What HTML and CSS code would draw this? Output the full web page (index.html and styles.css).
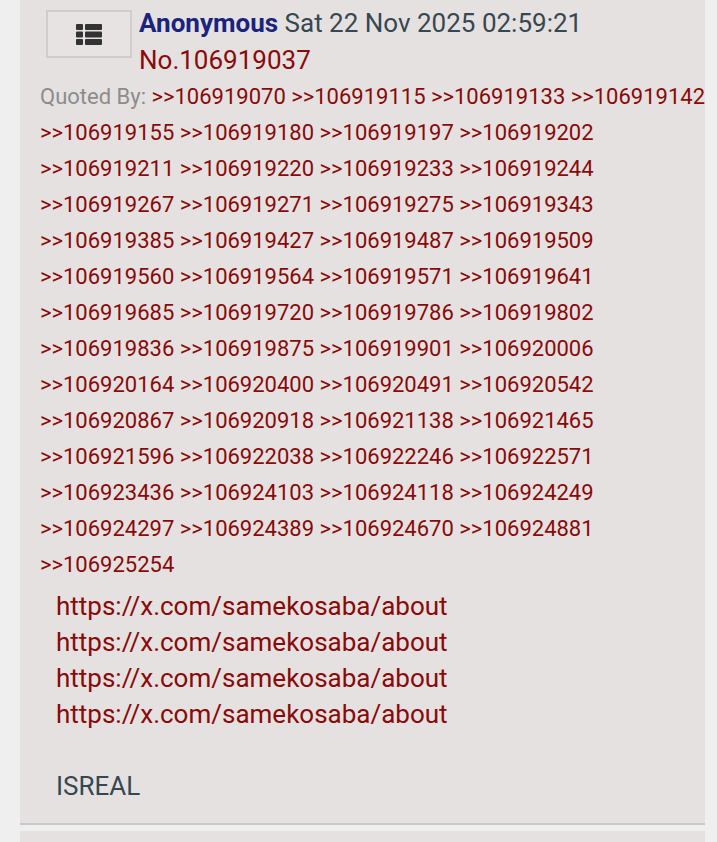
FILE: index.html
```html
<!DOCTYPE html>
<html lang="en">
<head>
    <meta charset="UTF-8">
    <meta name="viewport" content="width=device-width, initial-scale=1.0">
    <title>Thread</title>
    <link rel="stylesheet" href="styles.css">
</head>
<body>

<div class="post">
    <div class="post-head">
        <button class="menu-btn" aria-label="Post menu">
            <svg width="26" height="21" viewBox="0 0 26 21">
                <rect x="0" y="0" width="7" height="6" rx="1"/>
                <rect x="0" y="7.5" width="7" height="6" rx="1"/>
                <rect x="0" y="15" width="7" height="6" rx="1"/>
                <rect x="9" y="0" width="17" height="6" rx="1"/>
                <rect x="9" y="7.5" width="17" height="6" rx="1"/>
                <rect x="9" y="15" width="17" height="6" rx="1"/>
            </svg>
        </button>
        <div class="post-info">
            <span class="name">Anonymous</span> <span class="date">Sat 22 Nov 2025 02:59:21</span><br>
            <a class="post-no" href="#">No.106919037</a>
        </div>
    </div>

    <div class="backlinks">
        <span class="label">Quoted By:</span>
        <a href="#">&gt;&gt;106919070</a> <a href="#">&gt;&gt;106919115</a> <a href="#">&gt;&gt;106919133</a> <a href="#">&gt;&gt;106919142</a>
        <a href="#">&gt;&gt;106919155</a> <a href="#">&gt;&gt;106919180</a> <a href="#">&gt;&gt;106919197</a> <a href="#">&gt;&gt;106919202</a>
        <a href="#">&gt;&gt;106919211</a> <a href="#">&gt;&gt;106919220</a> <a href="#">&gt;&gt;106919233</a> <a href="#">&gt;&gt;106919244</a>
        <a href="#">&gt;&gt;106919267</a> <a href="#">&gt;&gt;106919271</a> <a href="#">&gt;&gt;106919275</a> <a href="#">&gt;&gt;106919343</a>
        <a href="#">&gt;&gt;106919385</a> <a href="#">&gt;&gt;106919427</a> <a href="#">&gt;&gt;106919487</a> <a href="#">&gt;&gt;106919509</a>
        <a href="#">&gt;&gt;106919560</a> <a href="#">&gt;&gt;106919564</a> <a href="#">&gt;&gt;106919571</a> <a href="#">&gt;&gt;106919641</a>
        <a href="#">&gt;&gt;106919685</a> <a href="#">&gt;&gt;106919720</a> <a href="#">&gt;&gt;106919786</a> <a href="#">&gt;&gt;106919802</a>
        <a href="#">&gt;&gt;106919836</a> <a href="#">&gt;&gt;106919875</a> <a href="#">&gt;&gt;106919901</a> <a href="#">&gt;&gt;106920006</a>
        <a href="#">&gt;&gt;106920164</a> <a href="#">&gt;&gt;106920400</a> <a href="#">&gt;&gt;106920491</a> <a href="#">&gt;&gt;106920542</a>
        <a href="#">&gt;&gt;106920867</a> <a href="#">&gt;&gt;106920918</a> <a href="#">&gt;&gt;106921138</a> <a href="#">&gt;&gt;106921465</a>
        <a href="#">&gt;&gt;106921596</a> <a href="#">&gt;&gt;106922038</a> <a href="#">&gt;&gt;106922246</a> <a href="#">&gt;&gt;106922571</a>
        <a href="#">&gt;&gt;106923436</a> <a href="#">&gt;&gt;106924103</a> <a href="#">&gt;&gt;106924118</a> <a href="#">&gt;&gt;106924249</a>
        <a href="#">&gt;&gt;106924297</a> <a href="#">&gt;&gt;106924389</a> <a href="#">&gt;&gt;106924670</a> <a href="#">&gt;&gt;106924881</a>
        <a href="#">&gt;&gt;106925254</a>
    </div>

    <div class="message">
        <a href="#">https://x.com/samekosaba/about</a><br>
        <a href="#">https://x.com/samekosaba/about</a><br>
        <a href="#">https://x.com/samekosaba/about</a><br>
        <a href="#">https://x.com/samekosaba/about</a><br>
        <br>
        ISREAL
    </div>
</div>

<div class="post next"></div>

</body>
</html>
```

FILE: styles.css
```css
body {
    font-family: Roboto, "Noto Sans", sans-serif;
    background-color: #efefef;
    margin: 0;
    padding: 0;
}

a {
    color: #880a0a;
    text-decoration: none;
}

.post {
    background-color: #e5e1e0;
    margin: 0 12px 6px 20px;
    border-bottom: 2px solid #cbc9c9;
    padding: 5px 0 19px 0;
}

.post.next {
    height: 40px;
    padding: 0;
    border: none;
}

.post-head {
    display: flex;
    align-items: flex-start;
}

.menu-btn {
    width: 86px;
    height: 48px;
    margin: 5px 7px 0 26px;
    background-color: #e6e3e2;
    border: 2px solid #d0cdcc;
    display: flex;
    align-items: center;
    justify-content: center;
    padding: 0;
}

.menu-btn svg {
    fill: #333;
}

.post-info {
    font-size: 26px;
    line-height: 37px;
    color: #37474f;
}

.name {
    color: #1a237e;
    font-weight: bold;
}

.backlinks {
    padding: 0 0 0 20px;
    font-size: 22px;
    line-height: 36px;
    margin-right: -4px;
}

.backlinks .label {
    color: #8c8c8c;
}

.message {
    padding: 5px 0 0 36px;
    font-size: 26px;
    line-height: 36px;
    color: #37474f;
}
```
